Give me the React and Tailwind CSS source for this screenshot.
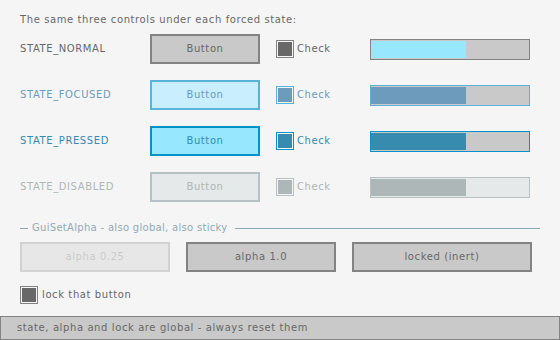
import React from "react";

const STATES = [
  {
    name: "STATE_NORMAL",
    label: "text-[#686868]",
    btn: "border-[#838383] bg-[#c9c9c9] text-[#686868]",
    boxBorder: "border-[#838383]",
    boxFill: "bg-[#686868]",
    barBorder: "border-[#838383] bg-[#c9c9c9]",
    barFill: "bg-[#97e8ff]",
  },
  {
    name: "STATE_FOCUSED",
    label: "text-[#6c9bbc]",
    btn: "border-[#5bb2d9] bg-[#c9effe] text-[#6c9bbc]",
    boxBorder: "border-[#5bb2d9]",
    boxFill: "bg-[#6c9bbc]",
    barBorder: "border-[#5bb2d9] bg-[#c9c9c9]",
    barFill: "bg-[#6c9bbc]",
  },
  {
    name: "STATE_PRESSED",
    label: "text-[#368baf]",
    btn: "border-[#0492c7] bg-[#97e8ff] text-[#368baf]",
    boxBorder: "border-[#0492c7]",
    boxFill: "bg-[#368baf]",
    barBorder: "border-[#0492c7] bg-[#c9c9c9]",
    barFill: "bg-[#368baf]",
  },
  {
    name: "STATE_DISABLED",
    label: "text-[#aeb7b8]",
    btn: "border-[#b5c1c2] bg-[#e6e9e9] text-[#aeb7b8]",
    boxBorder: "border-[#b5c1c2]",
    boxFill: "bg-[#aeb7b8]",
    barBorder: "border-[#b5c1c2] bg-[#e6e9e9]",
    barFill: "bg-[#aeb7b8]",
  },
];

function CheckBox({ border, fill }) {
  return (
    <div className={`w-[18px] h-[18px] border p-[1px] ${border}`}>
      <div className={`w-full h-full ${fill}`} />
    </div>
  );
}

function StateRow({ s }) {
  return (
    <div className="flex items-center h-[30px]">
      <div className={`w-[130px] ${s.label}`}>{s.name}</div>
      <div className={`w-[110px] h-[30px] border-2 flex items-center justify-center ${s.btn}`}>
        Button
      </div>
      <div className="ml-[16px] w-[94px] flex items-center gap-[3px]">
        <CheckBox border={s.boxBorder} fill={s.boxFill} />
        <span className={s.label}>Check</span>
      </div>
      <div className={`w-[160px] h-[21px] border py-[1px] ${s.barBorder}`}>
        <div className={`h-full w-[60%] ${s.barFill}`} />
      </div>
    </div>
  );
}

export default function App() {
  return (
    <div
      className="w-[560px] h-[340px] bg-[#f5f5f5] flex flex-col text-[10px] leading-none tracking-[0.6px] overflow-hidden"
      style={{ fontFamily: "'DejaVu Sans', sans-serif" }}
    >
      <div className="px-[20px] pt-[15px] h-[34px] text-[#686868]">
        The same three controls under each forced state:
      </div>

      <div className="px-[20px] flex flex-col gap-[16px]">
        {STATES.map((s) => (
          <StateRow key={s.name} s={s} />
        ))}
      </div>

      <div className="pl-[20px] pr-[20px] mt-[21px] flex items-center gap-[4px] text-[#90abb5] h-[10px]">
        <div className="w-[8px] h-px bg-[#90abb5] shrink-0" />
        <span className="whitespace-nowrap tracking-[0.3px]">GuiSetAlpha - also global, also sticky</span>
        <div className="ml-[3px] flex-1 h-px bg-[#90abb5]" />
      </div>

      <div className="px-[20px] mt-[9px] flex gap-[16px]">
        <div className="w-[150px] h-[30px] border-2 border-[#838383] bg-[#c9c9c9] text-[#686868] flex items-center justify-center opacity-[0.3]">
          alpha 0.25
        </div>
        <div className="w-[150px] h-[30px] border-2 border-[#838383] bg-[#c9c9c9] text-[#686868] flex items-center justify-center">
          alpha 1.0
        </div>
        <div className="w-[180px] h-[30px] border-2 border-[#838383] bg-[#c9c9c9] text-[#686868] flex items-center justify-center">
          locked (inert)
        </div>
      </div>

      <div className="px-[20px] mt-[14px] flex items-center gap-[4px] text-[#686868]">
        <CheckBox border="border-[#838383]" fill="bg-[#686868]" />
        <span>lock that button</span>
      </div>

      <div className="mt-[12px] h-[24px] border border-[#838383] bg-[#c9c9c9] text-[#686868] flex items-center px-[16px]">
        state, alpha and lock are global - always reset them
      </div>
    </div>
  );
}
